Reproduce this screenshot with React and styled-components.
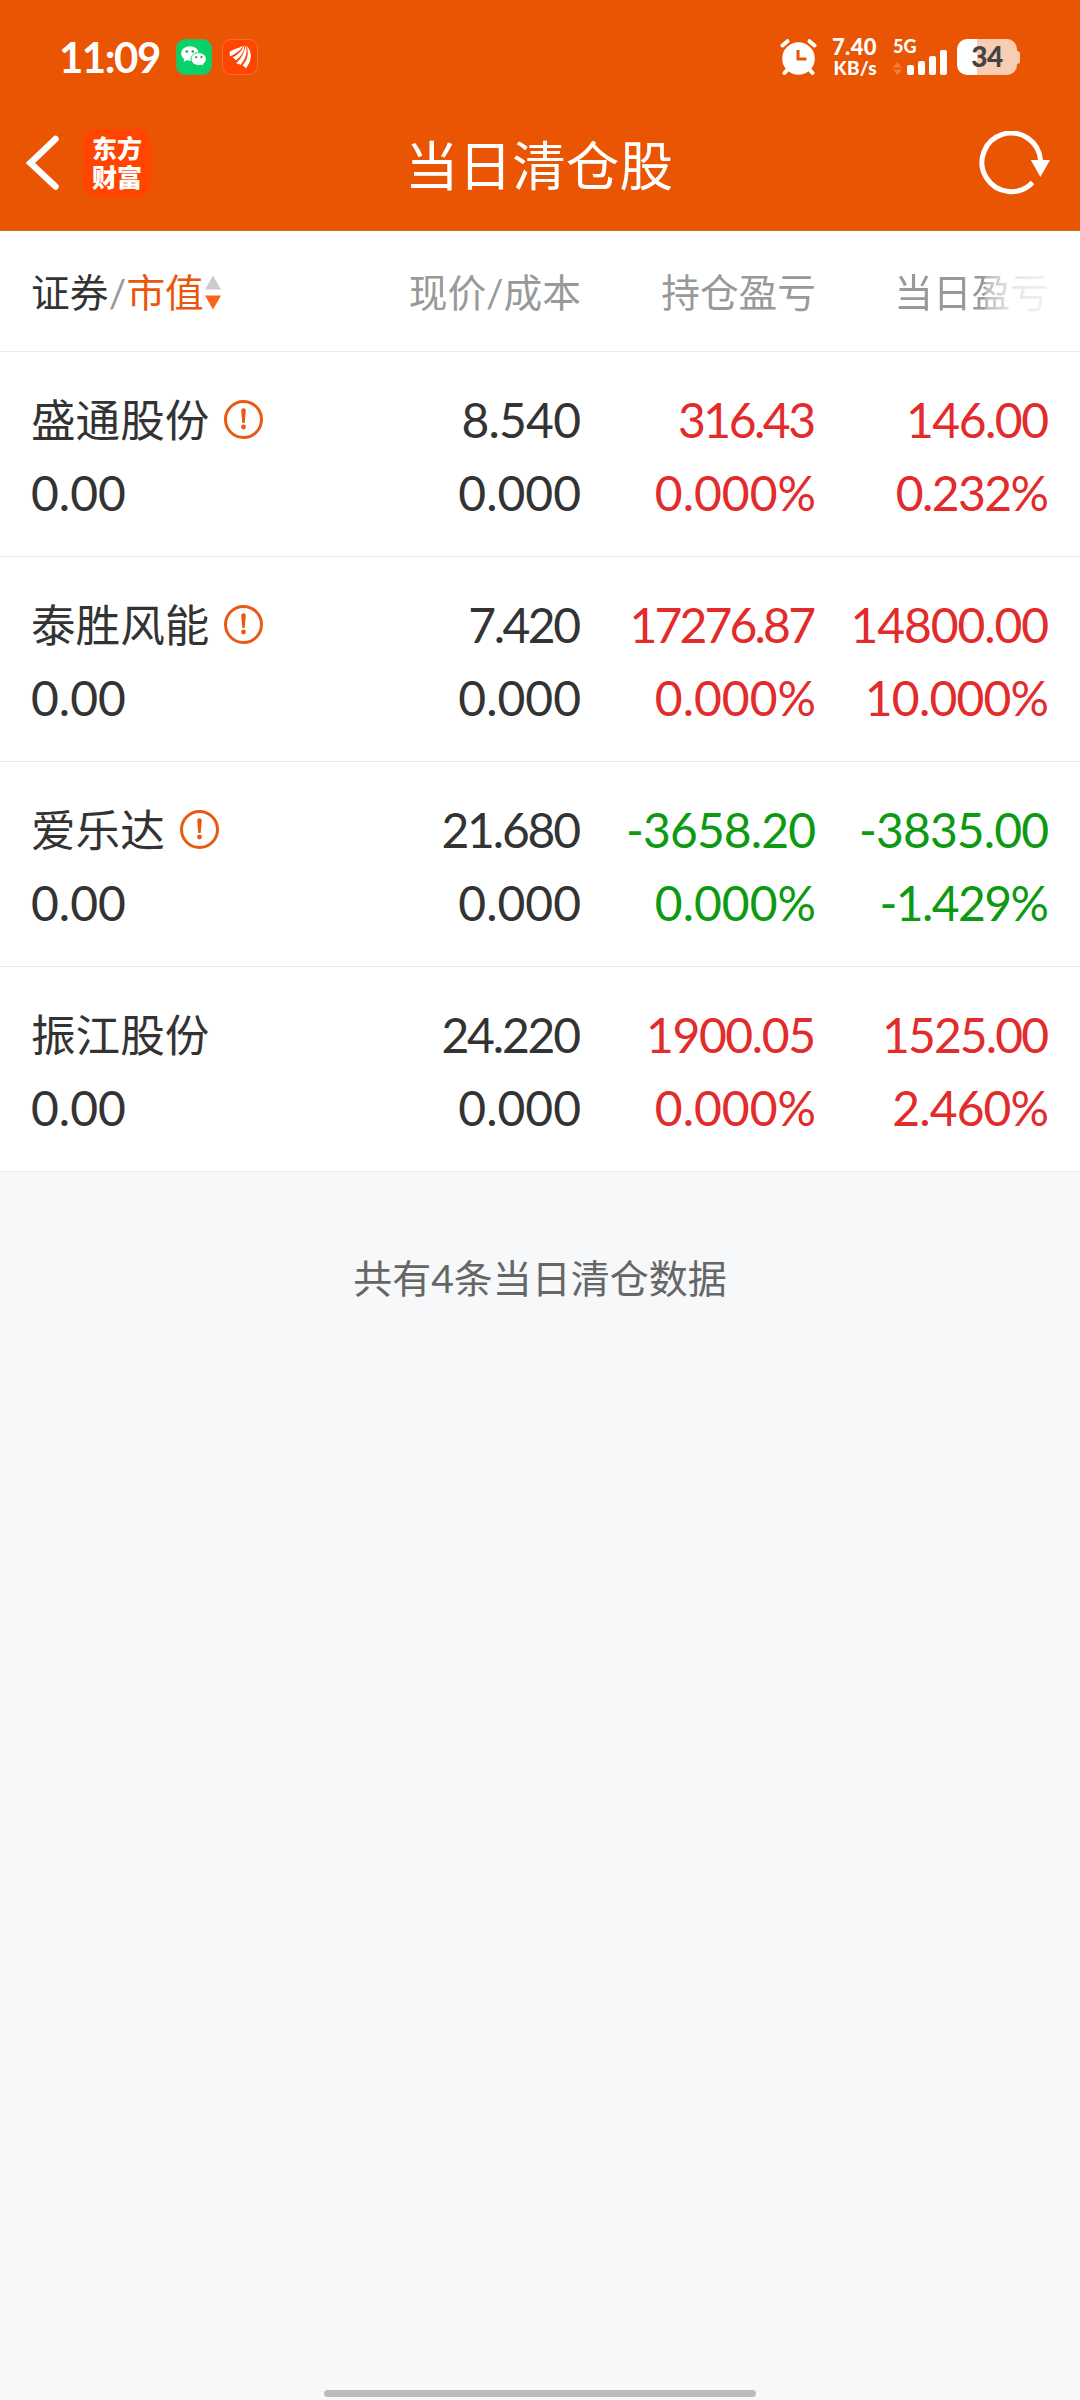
import styled, { createGlobalStyle } from "styled-components";

const GlobalStyle = createGlobalStyle`
  body {
    margin: 0;
    background: #f6f8fa;
    font-family: Lato, "Noto Sans CJK SC", sans-serif;
    color: #333;
  }
`;

const Page = styled.div`
  display: flex;
  flex-direction: column;
  width: 1080px;
  height: 2400px;
  overflow: hidden;
`;

const Header = styled.header`
  background: #ea5504;
  color: #fff;
  border-bottom: 1px solid #bc6531;
`;

const StatusBar = styled.div`
  display: flex;
  justify-content: space-between;
  box-sizing: border-box;
  height: 96px;
  padding: 39px 60px 0 59px;
`;

const StatusGroup = styled.div`
  display: flex;
  align-items: center;
  height: 36px;
`;

const Clock = styled.span`
  width: 103px;
  font-size: 42px;
  font-weight: 700;
  line-height: 35px;
  letter-spacing: -1.5px;
  margin-right: 14px;
`;

const AppBadge = styled.span`
  display: flex;
  box-sizing: border-box;
  width: 36px;
  height: 36px;
  margin-right: 10px;
  border: 1px solid ${(props) => props.$edge};
  border-radius: 9px;
  background: ${(props) => props.$color};
`;

const Speed = styled.div`
  width: 46px;
  margin: 0 16px 0 14px;
  text-align: right;
  font-weight: 900;
  white-space: nowrap;
`;

const SpeedValue = styled.div`
  font-size: 22px;
  line-height: 18px;
  letter-spacing: 0.4px;
  margin-bottom: 3px;
`;

const SpeedUnit = styled.div`
  font-size: 19px;
  line-height: 18px;
  letter-spacing: 0.3px;
`;

const Signal = styled.div`
  width: 55px;
  height: 36px;
  margin-right: 9px;
`;

const Network = styled.div`
  height: 11px;
  font-size: 18px;
  font-weight: 900;
  line-height: 15px;
`;

const Battery = styled.div`
  width: 60px;
  height: 36px;
  border-radius: 10px;
  background: linear-gradient(to right, #fff 20px, #f9ccb4 20px);
  color: #444;
  font-size: 28px;
  font-weight: 900;
  line-height: 35px;
  text-align: center;
  letter-spacing: -0.5px;
`;

const BatteryTip = styled.div`
  width: 3px;
  height: 13px;
  border-radius: 0 4px 4px 0;
  background: #f9ccb4;
`;

const NavBar = styled.div`
  display: grid;
  grid-template-columns: 1fr auto 1fr;
  align-items: center;
  height: 134px;
  padding: 0 29px 0 26px;
`;

const NavLeft = styled.div`
  display: flex;
  align-items: center;
  gap: 23px;
`;

const NavRight = styled.div`
  display: flex;
  justify-content: flex-end;
`;

const Logo = styled.div`
  display: flex;
  flex-direction: column;
  justify-content: center;
  width: 68px;
  height: 68px;
  border-radius: 14px;
  background: #ff4500;
  font-size: 25px;
  font-weight: 900;
  line-height: 29px;
  text-align: center;
`;

const Title = styled.h1`
  margin: 0;
  padding: 3px 0 0 1px;
  font-size: 53.6px;
  font-weight: 400;
  line-height: 72px;
`;

const Columns = styled.div`
  display: grid;
  grid-template-columns: 1fr 250px 235px 233px;
  padding: 0 31px;
  background: #fff;
  border-bottom: 1px solid #ebebeb;
  text-align: right;
`;

const HeadRow = styled(Columns)`
  height: 120px;
  color: #999;
  font-size: 38.7px;
  line-height: 122px;
`;

const SortHead = styled.div`
  display: flex;
  align-items: center;
  color: #333;
`;

const Slash = styled.span`
  width: 18px;
  color: #999;
  text-align: center;
`;

const SortActive = styled.span`
  color: #e8570d;
`;

const SortIcon = styled.svg`
  margin: 1px 0 0 1px;
`;

const FadedHead = styled.div`
  mask-image: linear-gradient(
    to right,
    #000 168px,
    rgba(0, 0, 0, 0.65) 171px,
    rgba(0, 0, 0, 0.25) 195px,
    rgba(0, 0, 0, 0.12) 100%
  );
`;

const StockRow = styled(Columns)`
  height: 173px;
  padding-top: 31px;
  font-size: 48px;
  line-height: 73px;
`;

const NameCell = styled.div`
  text-align: left;
`;

const Name = styled.div`
  display: flex;
  align-items: center;
  height: 73px;
  font-size: 44.6px;
`;

const WarnMark = styled.svg`
  margin-left: 15px;
`;

const tones = { up: "#e22b2b", down: "#0d9a12", flat: "#333" };

const Cell = styled.div`
  color: ${(props) => tones[props.$tone || "flat"]};
`;

// the trailing letter gap is given back so the right edges stay aligned
const Figure = styled.div`
  letter-spacing: -${(props) => props.$tight || 0}px;
  padding-right: ${(props) => props.$tight || 0}px;
`;

const Summary = styled.p`
  margin: 78px 0 0;
  color: #666;
  font-size: 39px;
  line-height: 56px;
  text-align: center;
`;

const HomeBar = styled.div`
  width: 432px;
  height: 7px;
  margin: auto auto 3px;
  border-radius: 4px;
  background: #bbbcbe;
`;

// each figure is [text, letter tightening]
const stocks = [
  {
    name: "盛通股份",
    warn: true,
    price: ["8.540", 0.8],
    profit: ["316.43", 2.5],
    today: ["146.00", 1.5],
    rate: ["0.232%", 1.6],
    tone: "up",
  },
  {
    name: "泰胜风能",
    warn: true,
    price: ["7.420", 2.5],
    profit: ["17276.87", 2.8],
    today: ["14800.00", 1.1],
    rate: ["10.000%", 0.8],
    tone: "up",
  },
  {
    name: "爱乐达",
    warn: true,
    price: ["21.680", 2.2],
    profit: ["-3658.20", 0.9],
    today: ["-3835.00", 0.9],
    rate: ["-1.429%", 1.6],
    tone: "down",
  },
  {
    name: "振江股份",
    warn: false,
    price: ["24.220", 2.2],
    profit: ["1900.05", 1.4],
    today: ["1525.00", 1.9],
    rate: ["2.460%", 0.9],
    tone: "up",
  },
];

function WechatIcon() {
  return (
    <svg width="34" height="34" viewBox="0 0 34 34">
      <path
        d="M13 6.2c-5 0-8.800 3.100-8.800 7.200 0 2.300 1.200 4.200 3.100 5.600l-.7 3 3.200-1.700c1 .3 2.100.4 3.200.4 5 0 8.700-3.200 8.700-7.300S18 6.200 13 6.200z"
        fill="#fff"
      />
      <path
        d="M21.800 12.600c-4.400 0-7.800 2.900-7.800 6.500s3.400 6.400 7.800 6.400c.9 0 1.800-.1 2.600-.4l2.500 1.400-.6-2.400c1.800-1.200 3-2.900 3-5 0-3.600-3.300-6.500-7.500-6.500z"
        fill="#fff"
        stroke="#08d166"
        strokeWidth="1"
      />
      <g fill="#08a955">
        <circle cx="9.800" cy="11.500" r="1.300" />
        <circle cx="15.800" cy="11.500" r="1.300" />
        <circle cx="19.200" cy="17.200" r="1.100" />
        <circle cx="24.500" cy="17.200" r="1.100" />
      </g>
    </svg>
  );
}

function WingIcon() {
  return (
    <svg width="34" height="34" viewBox="0 0 34 34" fill="#fff">
      <path d="M6.500 12.200C11 8.500 16 8.500 20.300 5.600C18 10.500 13.500 13 7 16.500z" />
      <path d="M9.500 17.500C15 15 19 11 21.200 5.600C21.500 11.500 18 16.500 13 20.500C12.200 19.200 11 18.200 9.500 17.500z" />
      <path d="M13 23.500C18.500 18.500 21.500 13 22.200 5.600C25.500 12 22.500 19 17.500 25C16.300 24 14.800 23.500 13 23.500z" />
      <path d="M23.500 5.600C29.500 12.500 29.500 20 22.800 28.500C22 27 21 26 19.500 25.500C25 19.500 26 13 23.500 5.600z" />
    </svg>
  );
}

function AlarmIcon() {
  return (
    <svg width="37" height="36" viewBox="0 0 37 36">
      <g stroke="#fff" strokeWidth="4" strokeLinecap="round">
        <path d="M2.500 6.500L7.500 2.200M34.500 6.500L29.500 2.200M8 30L4.500 34M29 30L32.500 34" />
      </g>
      <circle cx="18.500" cy="19.500" r="16.300" fill="#fff" />
      <path
        d="M18 11v9h8.500"
        fill="none"
        stroke="#ea5504"
        strokeWidth="3"
      />
    </svg>
  );
}

function SignalBars() {
  return (
    <svg width="55" height="25" viewBox="0 0 55 25">
      <path d="M0 17.500L4.500 12 9 17.500zM0 19.500L4.500 25 9 19.500z" fill="#f47b3b" />
      <g fill="#fff">
        <rect x="14" y="15" width="7" height="10" rx="2" />
        <rect x="25" y="11" width="7" height="14" rx="2" />
        <rect x="36" y="6" width="7" height="19" rx="2" />
        <rect x="47" y="0" width="7" height="25" rx="2" />
      </g>
    </svg>
  );
}

function BackIcon() {
  return (
    <svg width="34" height="58" viewBox="0 0 34 58">
      <path
        d="M29.500 5L4.500 29L29.500 52.500"
        fill="none"
        stroke="#fff"
        strokeWidth="6.500"
        strokeLinecap="round"
      />
    </svg>
  );
}

function RefreshIcon() {
  return (
    <svg width="72" height="64" viewBox="0 0 72 64">
      <path
        d="M61.500 29.500A29.300 29.300 0 1 0 53.500 51.500"
        fill="none"
        stroke="#fff"
        strokeWidth="5"
      />
      <path d="M51.800 29H71L61.400 46z" fill="#fff" />
    </svg>
  );
}

function WarnIcon() {
  return (
    <WarnMark width="39" height="39" viewBox="0 0 39 39">
      <circle
        cx="19.500"
        cy="19.500"
        r="18"
        fill="none"
        stroke="#e85a14"
        strokeWidth="3"
      />
      <path d="M17.200 10.500a2.300 2.300 0 0 1 4.600 0L20.700 23h-2.400z" fill="#e85a14" />
      <circle cx="19.500" cy="27" r="2.400" fill="#e85a14" />
    </WarnMark>
  );
}

function Num({ value }) {
  const [text, tight] = value;
  return <Figure $tight={tight}>{text}</Figure>;
}

export default function App() {
  return (
    <>
      <GlobalStyle />
      <Page>
        <Header>
          <StatusBar>
            <StatusGroup>
              <Clock>11:09</Clock>
              <AppBadge $color="#07d168" $edge="#3fb45c">
                <WechatIcon />
              </AppBadge>
              <AppBadge $color="#ff4500" $edge="#f96d3c">
                <WingIcon />
              </AppBadge>
            </StatusGroup>
            <StatusGroup>
              <AlarmIcon />
              <Speed>
                <SpeedValue>7.40</SpeedValue>
                <SpeedUnit>KB/s</SpeedUnit>
              </Speed>
              <Signal>
                <Network>5G</Network>
                <SignalBars />
              </Signal>
              <Battery>34</Battery>
              <BatteryTip />
            </StatusGroup>
          </StatusBar>
          <NavBar>
            <NavLeft>
              <BackIcon />
              <Logo>
                <span>东方</span>
                <span>财富</span>
              </Logo>
            </NavLeft>
            <Title>当日清仓股</Title>
            <NavRight>
              <RefreshIcon />
            </NavRight>
          </NavBar>
        </Header>
        <HeadRow>
          <SortHead>
            证券<Slash>/</Slash>
            <SortActive>市值</SortActive>
            <SortIcon width="16" height="35" viewBox="0 0 16 35">
              <path d="M0 14.500L8 0.500L16 14.500z" fill="#ccc" />
              <path d="M0 20.500L8 34.500L16 20.500z" fill="#fa6414" />
            </SortIcon>
          </SortHead>
          <div>现价/成本</div>
          <div>持仓盈亏</div>
          <FadedHead>当日盈亏</FadedHead>
        </HeadRow>
        {stocks.map((stock) => (
          <StockRow key={stock.name}>
            <NameCell>
              <Name>
                {stock.name}
                {stock.warn && <WarnIcon />}
              </Name>
              <Figure>0.00</Figure>
            </NameCell>
            <Cell>
              <Num value={stock.price} />
              <Figure>0.000</Figure>
            </Cell>
            <Cell $tone={stock.tone}>
              <Num value={stock.profit} />
              <Figure>0.000%</Figure>
            </Cell>
            <Cell $tone={stock.tone}>
              <Num value={stock.today} />
              <Num value={stock.rate} />
            </Cell>
          </StockRow>
        ))}
        <Summary>共有4条当日清仓数据</Summary>
        <HomeBar />
      </Page>
    </>
  );
}
